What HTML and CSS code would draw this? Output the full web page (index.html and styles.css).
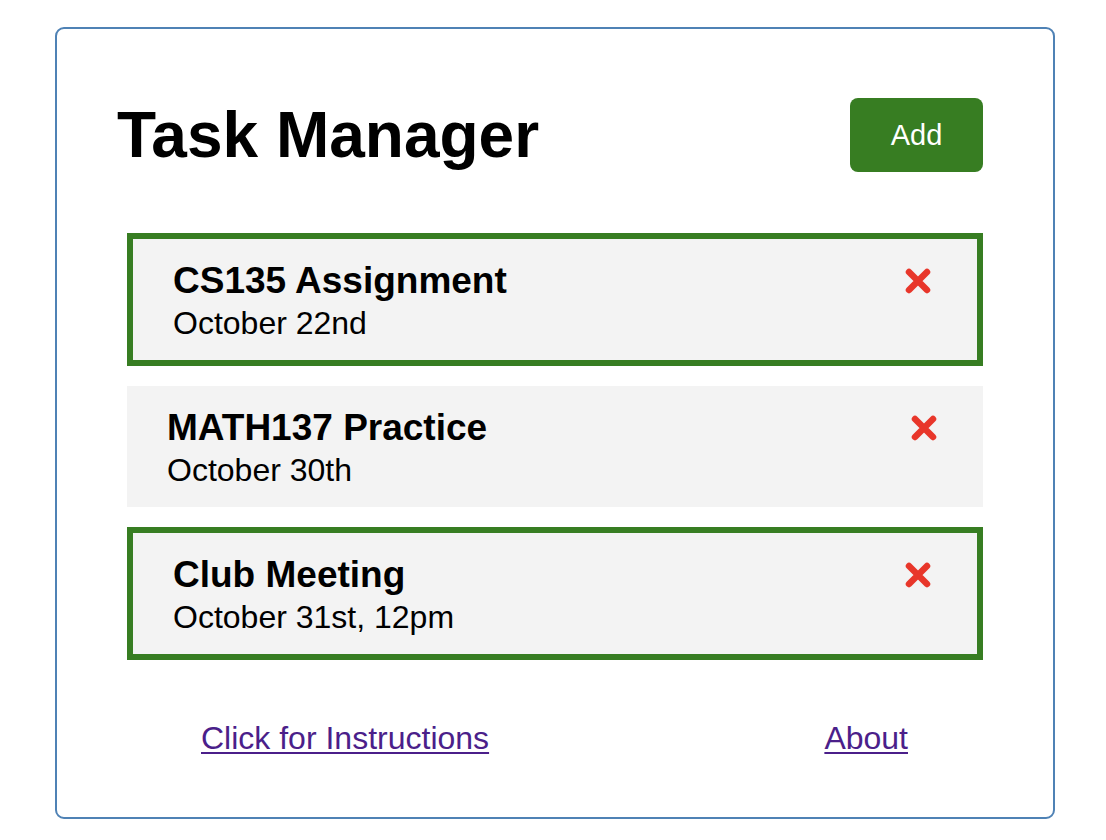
FILE: index.html
```html
<!DOCTYPE html>
<html lang="en">
<head>
<meta charset="utf-8">
<title>Task Manager</title>
<link rel="stylesheet" href="styles.css">
</head>
<body>
<div class="app">
  <header class="header">
    <h1 class="title">Task Manager</h1>
    <button class="add-btn" type="button">Add</button>
  </header>
  <ul class="tasks">
    <li class="task task--reminder">
      <div class="task-text">
        <h3 class="task-name">CS135 Assignment</h3>
        <p class="task-date">October 22nd</p>
      </div>
      <svg class="task-del" viewBox="0 0 26 26" aria-hidden="true"><path d="M4 4 L22 22 M22 4 L4 22"/></svg>
    </li>
    <li class="task">
      <div class="task-text">
        <h3 class="task-name">MATH137 Practice</h3>
        <p class="task-date">October 30th</p>
      </div>
      <svg class="task-del" viewBox="0 0 26 26" aria-hidden="true"><path d="M4 4 L22 22 M22 4 L4 22"/></svg>
    </li>
    <li class="task task--reminder">
      <div class="task-text">
        <h3 class="task-name">Club Meeting</h3>
        <p class="task-date">October 31st, 12pm</p>
      </div>
      <svg class="task-del" viewBox="0 0 26 26" aria-hidden="true"><path d="M4 4 L22 22 M22 4 L4 22"/></svg>
    </li>
  </ul>
  <footer class="footer">
    <a class="link" href="#instructions">Click for Instructions</a>
    <a class="link" href="#about">About</a>
  </footer>
</div>
</body>
</html>
```

FILE: styles.css
```css
* {
  box-sizing: border-box;
}

body {
  margin: 0;
  background: #ffffff;
  font-family: "Liberation Sans", Arial, Helvetica, sans-serif;
  color: #000000;
}

.app {
  width: 1000px;
  margin: 27px 0 0 55px;
  padding: 69px 70px 61px;
  border: 2px solid #4f82b5;
  border-radius: 9px;
}

.header {
  display: flex;
  align-items: center;
  justify-content: space-between;
  height: 74px;
  margin-left: -10px;
}

.title {
  margin: 0;
  font-size: 64px;
  font-weight: 700;
  line-height: 72px;
}

.add-btn {
  width: 133px;
  height: 74px;
  border: none;
  border-radius: 8px;
  background: #377d22;
  color: #ffffff;
  font-family: "Liberation Sans", Arial, sans-serif;
  font-size: 29px;
  padding: 0;
  cursor: pointer;
}

.tasks {
  list-style: none;
  margin: 61px 0 0;
  padding: 0;
  display: flex;
  flex-direction: column;
  gap: 20px;
}

.task {
  display: flex;
  justify-content: space-between;
  align-items: flex-start;
  background: #f3f3f3;
  padding: 21px 46px 16px 40px;
}

.task--reminder {
  border: 6px solid #377d22;
}

.task-name {
  margin: 0;
  font-size: 37px;
  font-weight: 700;
  line-height: 42px;
}

.task-date {
  margin: 0;
  font-size: 32px;
  line-height: 42px;
}

.task-del {
  width: 26px;
  height: 26px;
  margin-top: 8px;
  flex: none;
}

.task-del path {
  fill: none;
  stroke: #e8362a;
  stroke-width: 6.5;
  stroke-linecap: round;
}

.footer {
  display: flex;
  justify-content: space-between;
  margin-top: 60px;
  padding: 0 75px 0 74px;
  line-height: 36px;
}

.link {
  font-size: 32px;
  color: #4b1f8a;
  text-decoration: underline;
  text-decoration-thickness: 2px;
  text-underline-offset: 3px;
}
```
